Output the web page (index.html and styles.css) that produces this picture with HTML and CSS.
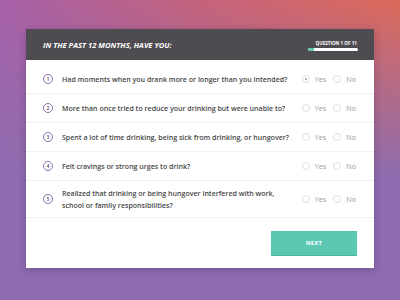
FILE: index.html
```html
<!DOCTYPE html>
<html lang="en">
<head>
    <meta charset="UTF-8">
    <meta name="viewport" content="width=device-width, initial-scale=1.0">
    <title>Screening questionnaire</title>
    <link rel="stylesheet" href="styles.css">
</head>
<body>
    <div class="card">
        <div class="card-header">
            <h1>IN THE PAST 12 MONTHS, HAVE YOU:</h1>
            <div class="progress">
                <span class="progress-label">QUESTION 1 OF 11</span>
                <div class="progress-bar"><div class="progress-fill" style="width: 12%"></div></div>
            </div>
        </div>
        <div class="questions">
            <div class="question">
                <span class="num">1</span>
                <p class="question-text">Had moments when you drank more or longer than you intended?</p>
                <div class="answers">
                    <label class="answer"><span class="radio checked"></span>Yes</label>
                    <label class="answer"><span class="radio"></span>No</label>
                </div>
            </div>
            <div class="question">
                <span class="num">2</span>
                <p class="question-text">More than once tried to reduce your drinking but were unable to?</p>
                <div class="answers">
                    <label class="answer"><span class="radio"></span>Yes</label>
                    <label class="answer"><span class="radio"></span>No</label>
                </div>
            </div>
            <div class="question">
                <span class="num">3</span>
                <p class="question-text">Spent a lot of time drinking, being sick from drinking, or hungover?</p>
                <div class="answers">
                    <label class="answer"><span class="radio"></span>Yes</label>
                    <label class="answer"><span class="radio"></span>No</label>
                </div>
            </div>
            <div class="question">
                <span class="num">4</span>
                <p class="question-text">Felt cravings or strong urges to drink?</p>
                <div class="answers">
                    <label class="answer"><span class="radio"></span>Yes</label>
                    <label class="answer"><span class="radio"></span>No</label>
                </div>
            </div>
            <div class="question">
                <span class="num">5</span>
                <p class="question-text">Realized that drinking or being hungover interfered with work,<br>school or family responsibilities?</p>
                <div class="answers">
                    <label class="answer"><span class="radio"></span>Yes</label>
                    <label class="answer"><span class="radio"></span>No</label>
                </div>
            </div>
        </div>
        <div class="card-footer">
            <button class="next-button">NEXT</button>
        </div>
    </div>
</body>
</html>
```

FILE: styles.css
```css
html, body {
    height: 100%;
}
body {
    margin: 0;
    padding: 29px 26px 0;
    box-sizing: border-box;
    font-family: "Open Sans", sans-serif;
    background:
        linear-gradient(to bottom, rgba(141, 108, 176, 0) 0, rgba(141, 108, 176, 0.6) 35%, #8d6cb0 60%),
        linear-gradient(to right, #a660a8, #c5637c 50%, #dc6a5a);
    overflow: hidden;
}
.card {
    width: 348px;
    background-color: white;
    box-shadow: 0 2px 8px rgba(40, 20, 60, 0.25);
}
.card-header {
    display: flex;
    align-items: center;
    justify-content: space-between;
    height: 31px;
    padding: 0 16px 0 17px;
    background-color: #4e4b51;
}
h1 {
    margin: 0;
    font-size: 7.6px;
    font-weight: 700;
    font-style: italic;
    color: white;
}
.progress {
    display: flex;
    flex-direction: column;
    align-items: flex-end;
    gap: 2px;
    width: 50px;
    margin-top: 1px;
}
.progress-label {
    font-size: 4.6px;
    font-weight: 700;
    color: white;
    line-height: 6px;
    margin-right: 1px;
}
.progress-bar {
    width: 100%;
    height: 3px;
    border-radius: 2px;
    background-color: white;
    overflow: hidden;
}
.progress-fill {
    height: 100%;
    background-color: #5cc8b3;
}
.questions {
    padding-top: 5px;
}
.question {
    display: flex;
    align-items: center;
    min-height: 16px;
    padding: 6px 18px 6px 16px;
    border-bottom: 1px solid #f1f1f1;
}
.num {
    flex: none;
    width: 8px;
    height: 8px;
    border: 1px solid #8373ad;
    border-radius: 50%;
    display: flex;
    align-items: center;
    justify-content: center;
    font-size: 5.2px;
    font-weight: 600;
    color: #55487a;
    margin: 0 9px 0 1px;
}
.question-text {
    flex: 1;
    margin: 0;
    font-size: 7.05px;
    font-weight: 600;
    line-height: 12px;
    color: #474747;
}
.answers {
    display: flex;
    gap: 7px;
}
.answer {
    display: flex;
    align-items: center;
    gap: 5px;
    font-size: 7.2px;
    color: #9b9b9b;
}
.radio {
    width: 6px;
    height: 6px;
    border: 1px solid #e0e0e0;
    border-radius: 50%;
    display: flex;
    align-items: center;
    justify-content: center;
}
.radio.checked::after {
    content: "";
    width: 2.5px;
    height: 2.5px;
    border-radius: 50%;
    background-color: #9a9a9a;
}
.card-footer {
    display: flex;
    justify-content: flex-end;
    padding: 13px 17px;
}
.next-button {
    width: 86px;
    height: 24px;
    border: none;
    background-color: #5cc8b4;
    box-shadow: 0 1px 0 #4eb3a0;
    color: white;
    font-family: "Open Sans", sans-serif;
    font-size: 6px;
    font-weight: 700;
    letter-spacing: 0.2px;
}
```
